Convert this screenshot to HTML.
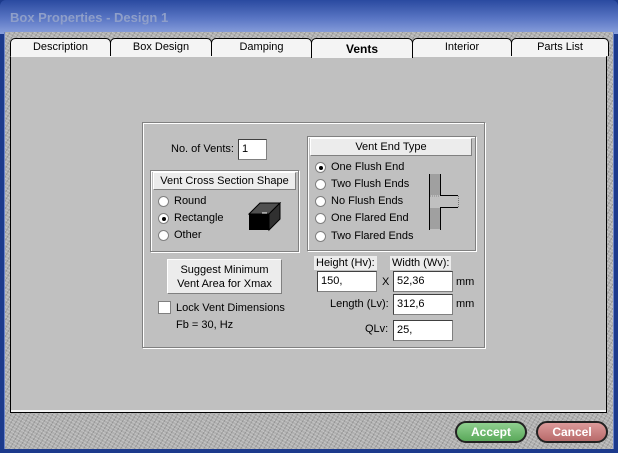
<!DOCTYPE html>
<html><head><style>
*{box-sizing:border-box;margin:0;padding:0}
body{width:618px;height:453px;overflow:hidden;position:relative;font-family:"Liberation Sans",sans-serif;font-size:11px;color:#000;background:#1c3a8c}
.a{position:absolute}
.title{left:0;top:0;width:618px;height:34px;background:linear-gradient(#2a4aa0,#5a76c4 55%,#8aa0dc);border-radius:6px 6px 0 0}
.tt{left:10px;top:10px;color:#8f9fc9;font-weight:bold;font-size:13px}
.gran{left:4px;top:32px;width:610px;height:417px;background-color:#b0b0b0;background-image:repeating-linear-gradient(30deg,rgba(255,255,255,.25) 0 1px,transparent 1px 3px),repeating-linear-gradient(120deg,rgba(0,0,0,.15) 0 1px,transparent 1px 4px);border-left:1px solid #6b83c8;border-right:1px solid #6b83c8}
.tab{top:38px;height:18px;background:#f4f4f4;border:1px solid #000;border-bottom:none;border-radius:5px 5px 0 0;text-align:center;line-height:17px;font-size:11px}
.panel{left:10px;top:55px;width:597px;height:358px;background:#c0c0c0;border:1px solid #000;border-top:2px solid #f4f4f4;box-shadow:inset 0 -2px 0 #f4f4f4}
.grp{border:1px solid #808080;box-shadow:1px 1px 0 #fff,inset 1px 1px 0 #fff}
.hdr{background:#ececec;text-align:center;line-height:17px;border:1px solid #808080;border-top-color:#fff;border-left-color:#fff}
.inp{background:#fff;border:1px solid #808080;border-top-color:#404040;border-left-color:#404040;padding-left:3px;line-height:18px}
.rad{width:11px;height:11px;border-radius:50%;background:#fff;border:1px solid #808080}
.rad.on::after{content:"";position:absolute;left:3px;top:3px;width:4px;height:4px;border-radius:50%;background:#000}
.lbl{background:#ececec;padding:0 2px;line-height:14px}
.btn{border-radius:12px;color:#fff;font-weight:bold;font-size:12px;text-align:center;line-height:19px;border:2px solid #222}
</style></head><body>
<div class="a title"></div>
<div class="a tt">Box Properties - Design 1</div>
<div class="a gran"></div>
<div class="a panel"></div>
<div class="a tab" style="left:10px;width:101px">Description</div>
<div class="a tab" style="left:110px;width:102px">Box Design</div>
<div class="a tab" style="left:211px;width:101px">Damping</div>
<div class="a tab" style="left:311px;width:102px;height:20px;font-weight:bold;font-size:12px;line-height:20px">Vents</div>
<div class="a tab" style="left:412px;width:100px">Interior</div>
<div class="a tab" style="left:511px;width:98px">Parts List</div>

<div class="a grp" style="left:142px;top:122px;width:343px;height:226px"></div>
<div class="a" style="left:171px;top:143px">No. of Vents:</div>
<div class="a inp" style="left:238px;top:139px;width:29px;height:21px">1</div>

<div class="a grp" style="left:150px;top:170px;width:149px;height:82px"></div>
<div class="a hdr" style="left:153px;top:172px;width:143px;height:18px">Vent Cross Section Shape</div>
<div class="a rad" style="left:158px;top:196px"></div><div class="a" style="left:174px;top:195px">Round</div>
<div class="a rad on" style="left:158px;top:213px"></div><div class="a" style="left:174px;top:212px">Rectangle</div>
<div class="a rad" style="left:158px;top:230px"></div><div class="a" style="left:174px;top:229px">Other</div>
<svg class="a" style="left:248px;top:202px" width="34" height="30"><polygon points="1,12 12,1 32,1 21,12" fill="#505050" stroke="#000"/><polygon points="21,12 32,1 32,17 21,28" fill="#303030" stroke="#000"/><rect x="1" y="12" width="20" height="16" fill="#000"/><line x1="14" y1="11" x2="19" y2="11" stroke="#fff"/></svg>

<div class="a grp" style="left:307px;top:136px;width:169px;height:115px"></div>
<div class="a hdr" style="left:310px;top:138px;width:162px;height:18px">Vent End Type</div>
<div class="a rad on" style="left:315px;top:162px"></div><div class="a" style="left:331px;top:161px">One Flush End</div>
<div class="a rad" style="left:315px;top:179px"></div><div class="a" style="left:331px;top:178px">Two Flush Ends</div>
<div class="a rad" style="left:315px;top:196px"></div><div class="a" style="left:331px;top:195px">No Flush Ends</div>
<div class="a rad" style="left:315px;top:213px"></div><div class="a" style="left:331px;top:212px">One Flared End</div>
<div class="a rad" style="left:315px;top:231px"></div><div class="a" style="left:331px;top:230px">Two Flared Ends</div>
<svg class="a" style="left:428px;top:174px" width="32" height="56"><rect x="1" y="0" width="11" height="21" fill="#a0a0a0"/><rect x="1" y="34" width="11" height="21" fill="#a0a0a0"/><line x1="1.5" y1="0" x2="1.5" y2="56" stroke="#000"/><line x1="12.5" y1="0" x2="12.5" y2="21" stroke="#000"/><line x1="12.5" y1="34" x2="12.5" y2="56" stroke="#000"/><line x1="12" y1="21.5" x2="30" y2="21.5" stroke="#000"/><line x1="12" y1="33.5" x2="30" y2="33.5" stroke="#000"/><line x1="30.5" y1="22" x2="30.5" y2="33" stroke="#777" stroke-dasharray="1 1"/><line x1="2" y1="22" x2="12" y2="22" stroke="#888" stroke-dasharray="1 1"/></svg>

<div class="a" style="left:167px;top:259px;width:115px;height:35px;background:#ececec;border:1px solid #808080;border-top-color:#fff;border-left-color:#fff;text-align:center;line-height:14px;padding-top:3px">Suggest Minimum<br>Vent Area for Xmax</div>
<div class="a" style="left:158px;top:301px;width:13px;height:13px;background:#fff;border:1px solid #808080"></div>
<div class="a" style="left:176px;top:302px">Lock Vent Dimensions</div>
<div class="a" style="left:176px;top:319px">Fb = 30, Hz</div>

<div class="a lbl" style="left:314px;top:256px">Height (Hv):</div>
<div class="a lbl" style="left:390px;top:256px">Width (Wv):</div>
<div class="a inp" style="left:317px;top:271px;width:60px;height:21px">150,</div>
<div class="a" style="left:382px;top:276px">X</div>
<div class="a inp" style="left:393px;top:271px;width:60px;height:21px">52,36</div>
<div class="a" style="left:456px;top:276px">mm</div>
<div class="a" style="left:330px;top:298px">Length (Lv):</div>
<div class="a inp" style="left:393px;top:294px;width:60px;height:21px">312,6</div>
<div class="a" style="left:456px;top:298px">mm</div>
<div class="a" style="left:365px;top:323px">QLv:</div>
<div class="a inp" style="left:393px;top:320px;width:60px;height:21px">25,</div>

<div class="a btn" style="left:455px;top:421px;width:72px;height:22px;background:linear-gradient(#8fd08f,#5aa85a)">Accept</div>
<div class="a btn" style="left:536px;top:421px;width:72px;height:22px;background:linear-gradient(#dc9a9a,#b86a6a)">Cancel</div>
</body></html>
